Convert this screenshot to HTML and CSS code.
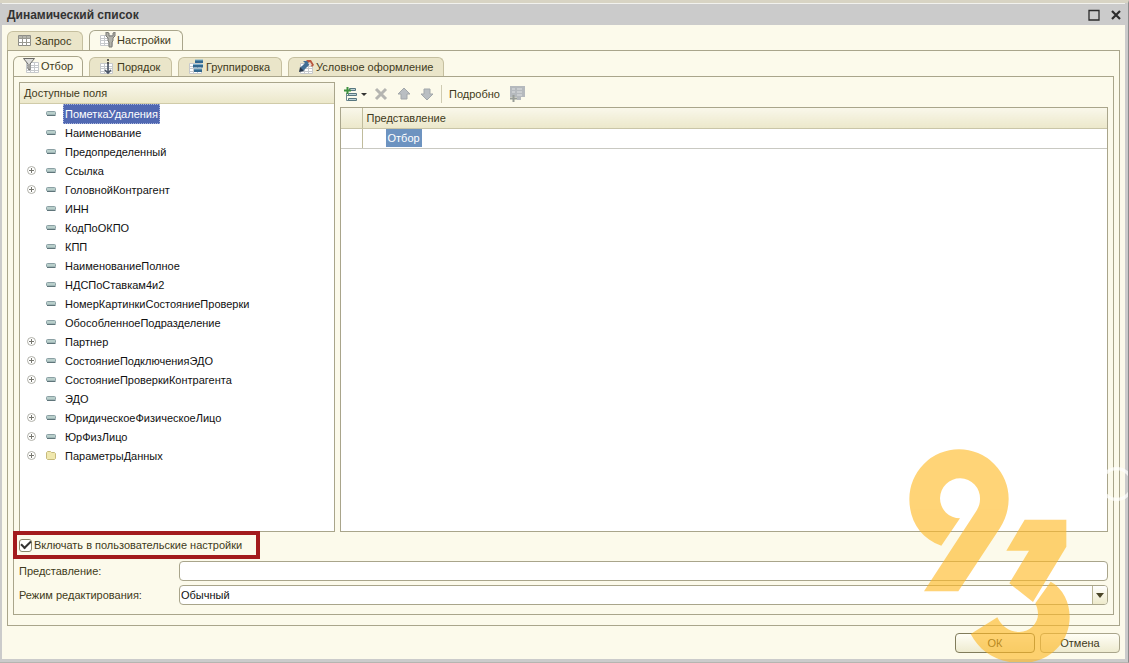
FILE: index.html
```html
<!DOCTYPE html>
<html lang="ru">
<head>
<meta charset="utf-8">
<title>Динамический список</title>
<link rel="stylesheet" href="styles.css">
</head>
<body>
<svg class="defs" aria-hidden="true">
  <symbol id="sheet" viewBox="0 0 16 16"><path d="M1.500 3.500h12v10h-12zM1.500 6.500h12M1.500 8.500h12M1.500 11.500h12M5.500 3.500v10M9.500 3.500v10" fill="#fff" stroke="#c6c9cc"/></symbol>
  <symbol id="plus" viewBox="0 0 9 9"><circle cx="4.500" cy="4.500" r="4" fill="#fff" stroke="#b0b0a8"/><path d="M2 4.500h5M4.500 2v5" stroke="#77776f"/></symbol>
  <symbol id="field" viewBox="0 0 10 5"><rect x=".5" y=".5" width="9" height="3.500" rx="1" fill="#b9cfcb" stroke="#8ba0a4"/><path d="M1 4.500h8.500" stroke="#5f757a"/></symbol>
  <symbol id="folder" viewBox="0 0 10 9"><path d="M.5 1.500l1-1h3l1 1h3l1 1v5l-1 1h-7l-1-1z" fill="#f0e8ae" stroke="#c6ba7c"/></symbol>
</svg>
<main class="window">
  <header class="titlebar">
    <h1>Динамический список</h1>
    <button class="winbtn" aria-label="Развернуть"><svg width="12" height="12" viewBox="0 0 12 12"><path d="M1 1.500h10V11H1z" fill="none" stroke="#2b2b2b" stroke-width="1.300"/></svg></button>
    <button class="winbtn" aria-label="Закрыть"><svg width="12" height="12" viewBox="0 0 12 12"><path d="M2 2l8 8M10 2l-8 8" stroke="#2b2b2b" stroke-width="2.200"/></svg></button>
  </header>
  <div class="body">
    <nav class="tabs">
      <button class="tab w76"><svg width="17" height="16" viewBox="0 0 17 16"><path d="M1.500 2.500h12v10h-12z" fill="#fff" stroke="#8d8d86"/><path d="M2 3h11v2H2z" fill="#b5b5ac"/><path d="M1.500 5.500h12M1.500 9.500h12M5.500 2.500v10M9.500 2.500v10" stroke="#9a9a92"/></svg>Запрос</button>
      <button class="tab w94 active"><svg width="17" height="16" viewBox="0 0 17 16"><use href="#sheet" width="16" height="16"/><path d="M7 0v4l2 2v3l1 1v5h3v-5l1-1V6l2-2V0l-2 1v3h-4V1z" fill="#b1b1aa" stroke="#7a7a74"/></svg>Настройки</button>
    </nav>
    <section class="panel outer">
      <nav class="tabs">
        <button class="tab w70 active"><svg width="17" height="16" viewBox="0 0 17 16"><use href="#sheet" x="2" y="1" width="16" height="16"/><path d="M.5.500h11L7 6v6l-2-1V6z" fill="#dededb" stroke="#696965"/></svg>Отбор</button>
        <button class="tab w83"><svg width="17" height="16" viewBox="0 0 17 16"><use href="#sheet" y="1" width="16" height="16"/><path d="M8 0h2v2H8zM8 3h2v2H8z" fill="#555"/><path d="M9 5v9M6 11l3 3 3-3" fill="none" stroke="#4b5668" stroke-width="1.600"/></svg>Порядок</button>
        <button class="tab w104"><svg width="17" height="16" viewBox="0 0 17 16"><use href="#sheet" y="1" width="16" height="16"/><path d="M7 1h8v3H7zM5 5.500h10v3H5zM6 10h8v3H6z" fill="#32688f"/><path d="M7 1h8M5 5.500h10M6 10h8" stroke="#80b3cd"/></svg>Группировка</button>
        <button class="tab w156"><svg width="17" height="16" viewBox="0 0 17 16"><use href="#sheet" x="1" y="1" width="16" height="16"/><path d="M5 2h5l2 3-7 7-3-3 5-5z" fill="#426f96"/><path d="M8 1h5l3 5-2 2-3-4z" fill="#b9563e"/><path d="M10 4l2-1 2 3-2 1z" fill="#e6d8cc"/><path d="M2 8l4 4-5 1z" fill="#26364b"/></svg>Условное оформление</button>
      </nav>
      <section class="panel inner">
        <div class="columns">
          <section class="fields">
            <h2 class="head">Доступные поля</h2>
            <ul class="tree">
              <li><i></i><svg class="f"><use href="#field"/></svg><span class="selected">ПометкаУдаления</span></li>
              <li><i></i><svg class="f"><use href="#field"/></svg><span>Наименование</span></li>
              <li><i></i><svg class="f"><use href="#field"/></svg><span>Предопределенный</span></li>
              <li><svg class="p"><use href="#plus"/></svg><svg class="f"><use href="#field"/></svg><span>Ссылка</span></li>
              <li><svg class="p"><use href="#plus"/></svg><svg class="f"><use href="#field"/></svg><span>ГоловнойКонтрагент</span></li>
              <li><i></i><svg class="f"><use href="#field"/></svg><span>ИНН</span></li>
              <li><i></i><svg class="f"><use href="#field"/></svg><span>КодПоОКПО</span></li>
              <li><i></i><svg class="f"><use href="#field"/></svg><span>КПП</span></li>
              <li><i></i><svg class="f"><use href="#field"/></svg><span>НаименованиеПолное</span></li>
              <li><i></i><svg class="f"><use href="#field"/></svg><span>НДСПоСтавкам4и2</span></li>
              <li><i></i><svg class="f"><use href="#field"/></svg><span>НомерКартинкиСостояниеПроверки</span></li>
              <li><i></i><svg class="f"><use href="#field"/></svg><span>ОбособленноеПодразделение</span></li>
              <li><svg class="p"><use href="#plus"/></svg><svg class="f"><use href="#field"/></svg><span>Партнер</span></li>
              <li><svg class="p"><use href="#plus"/></svg><svg class="f"><use href="#field"/></svg><span>СостояниеПодключенияЭДО</span></li>
              <li><svg class="p"><use href="#plus"/></svg><svg class="f"><use href="#field"/></svg><span>СостояниеПроверкиКонтрагента</span></li>
              <li><i></i><svg class="f"><use href="#field"/></svg><span>ЭДО</span></li>
              <li><svg class="p"><use href="#plus"/></svg><svg class="f"><use href="#field"/></svg><span>ЮридическоеФизическоеЛицо</span></li>
              <li><svg class="p"><use href="#plus"/></svg><svg class="f"><use href="#field"/></svg><span>ЮрФизЛицо</span></li>
              <li><svg class="p"><use href="#plus"/></svg><svg class="d"><use href="#folder"/></svg><span>ПараметрыДанных</span></li>
            </ul>
          </section>
          <section class="filter">
            <div class="toolbar">
              <button class="tool add" aria-label="Добавить"><svg width="24" height="16" viewBox="0 0 24 16"><path d="M3.500 7v7.500H7M3.500 9.500H7" fill="none" stroke="#6c8790"/><path d="M6.500 2.500h6v2h-6zM5.500 7.500h8v2h-8zM5.500 12.500h8v2h-8z" fill="#bfd3d6" stroke="#58777f"/><path d="M1 4.500h7M4.500 1v7" stroke="#3f9140" stroke-width="2"/><path d="M18 7h6l-3 3z" fill="#333"/></svg></button>
              <button class="tool" aria-label="Удалить"><svg width="14" height="16" viewBox="0 0 14 16"><path d="M2 3l10 10M12 3L2 13" stroke="#b5b5b1" stroke-width="3"/></svg></button>
              <button class="tool" aria-label="Вверх"><svg width="14" height="16" viewBox="0 0 14 16"><path d="M7 2l6 6h-3v5H4V8H1z" fill="#b9bec2" stroke="#a2a7aa"/></svg></button>
              <button class="tool" aria-label="Вниз"><svg width="14" height="16" viewBox="0 0 14 16"><path d="M7 14L1 8h3V3h6v5h3z" fill="#b9bec2" stroke="#a2a7aa"/></svg></button>
              <span class="sep"></span>
              <button class="tool more">Подробно</button>
              <button class="tool" aria-label="Добавить группу"><svg width="17" height="17" viewBox="0 0 17 17"><path d="M1 1h15v11h-4v3H8v-3H1z" fill="#b5b9bd"/><path d="M3 4h3M8 4h5M3 7h3M8 7h5M8 10h5" stroke="#dfe1e2"/><path d="M1 13.500h7M4.500 10v7" stroke="#989d98" stroke-width="2"/></svg></button>
            </div>
            <div class="tablebox">
              <table>
                <thead><tr><th class="mark"></th><th>Представление</th></tr></thead>
                <tbody><tr><td class="mark"></td><td class="item"><span>Отбор</span></td></tr></tbody>
              </table>
            </div>
          </section>
        </div>
        <label class="check"><input type="checkbox" checked><span>Включать в пользовательские настройки</span></label>
        <div class="form">
          <label for="view">Представление:</label>
          <input id="view" class="ctl" type="text">
          <label for="mode">Режим редактирования:</label>
          <div class="combo ctl"><select id="mode"><option>Обычный</option></select><span class="arrow"><svg width="8" height="5" viewBox="0 0 8 5"><path d="M0 0h8L4 5z" fill="#4a4528"/></svg></span></div>
        </div>
      </section>
    </section>
    <footer class="actions"><button class="action ok">ОК</button><button class="action">Отмена</button></footer>
  </div>
  <svg class="logo" viewBox="0 0 747 699" aria-hidden="true">
    <g fill="#ffb924" opacity=".62">
      <path d="M184 347C120 325 88 270 88 207A149 149 0 0 1 386 207C386 240 375 270 360 294L235 484H132L287 246C296 232 300 222 300 207A60 60 0 1 0 240 265Z"/>
      <path d="M434 269H559V350L459 516L388 460L447 362H379Z"/>
      <path d="M512 455C550 475 569 520 569 560C569 640 505 699 425 699C350 699 300 665 272 612L352 562C365 590 390 606 418 606C450 606 474 580 474 552C474 540 470 528 466 520Z"/>
    </g>
    <circle cx="710" cy="162" r="46" fill="none" stroke="#fff" stroke-width="10" opacity=".7"/>
  </svg>
</main>
</body>
</html>
```
FILE: styles.css
```css
* { box-sizing: border-box; }
body { margin: 0; font: 11px/14px "Liberation Sans", Arial, sans-serif; color: #3f3a20; }
button, input, select { font: inherit; color: inherit; margin: 0; }
button { display: flex; align-items: center; border: 0; padding: 0; background: none; }
svg { display: block; flex: none; }
.defs { position: absolute; width: 0; height: 0; }
.window { position: relative; display: flex; flex-direction: column; min-height: 100vh; overflow: hidden; background: #cbcbcb; border-top: 3px solid #d8d4c4; border-right: 1px solid #8c8c8c; border-bottom: 1px solid #b5b5b0; padding: 0 3px 3px 2px; }
.titlebar { display: flex; align-items: center; gap: 10px; height: 22px; padding: 1px 3px 0 5px; border-top: 1px solid #f2f2ee; }
.titlebar h1 { margin: 0; flex: 1; font-size: 12px; font-weight: bold; color: #333; }
.body { flex: 1; display: flex; flex-direction: column; background: #fcfaeb; padding: 5px 5px 6px; }
.tabs { display: flex; align-items: flex-end; gap: 6px; height: 21px; margin-bottom: -1px; }
.tab { height: 20px; gap: 1px; padding: 0 0 1px 9px; border: 1px solid #c5bf9f; border-bottom-color: #a9a58b; border-radius: 6px 6px 0 0; background: #eae5c9; white-space: nowrap; }
.tab.active { height: 21px; border-color: #a9a58b; border-bottom-color: #fcfaeb; background: #fcfaeb; }
.w76 { width: 76px; } .w94 { width: 94px; } .w70 { width: 70px; } .w83 { width: 83px; } .w104 { width: 104px; } .w156 { width: 156px; }
.panel { flex: 1; display: flex; flex-direction: column; border: 1px solid #a9a58b; padding: 5px; }
.outer { padding-bottom: 10px; }
.inner { padding-bottom: 9px; }
.columns { flex: 1; display: grid; grid-template-columns: 316px minmax(0, 1fr); gap: 5px; }
.fields, .tablebox { border: 1px solid #a9a58b; background: #fff; }
.head { margin: 0; padding: 3px 4px; height: 21px; font-size: inherit; font-weight: normal; border-bottom: 1px solid #d0cba9; background: linear-gradient(#f9f7ea, #ece8cb); }
.tree { margin: 0; padding: 0 0 0 7px; list-style: none; color: #111; }
.tree li { display: flex; align-items: center; height: 19px; }
.tree i, .p { width: 9px; height: 9px; margin-right: 10px; }
.f { width: 10px; height: 5px; margin-right: 7px; }
.d { width: 10px; height: 9px; margin-right: 7px; }
.tree span { padding: 2px 1px; border: 1px dotted transparent; }
.tree .selected { color: #fff; background: #5068b2; border-color: #a8b4dc; }
.filter { display: flex; flex-direction: column; }
.toolbar { display: flex; align-items: center; gap: 9px; height: 25px; padding: 0 0 2px 3px; }
.tool { height: 20px; }
.add { margin-right: -2px; }
.sep { width: 1px; height: 18px; background: #cfcbb2; margin: 0 -2px; }
.tablebox { flex: 1; }
table { width: 100%; border-collapse: collapse; }
th, td { height: 20px; padding: 0 4px; text-align: left; font-weight: normal; border-bottom: 1px solid #c9c5a8; }
th { background: linear-gradient(#f9f7ea, #ece8cb); }
td { border-bottom-color: #c9c9c2; }
.mark { width: 21px; border-right: 1px solid #c0bc9c; }
td.item { padding: 0 0 0 23px; }
.item span { display: inline-block; padding: 2px 2px; color: #fff; background: #6d93c0; }
.check { display: flex; align-items: center; align-self: flex-start; gap: 2px; height: 28px; width: 247px; margin: -1px 0 0 -6px; padding-left: 2px; border: 4px solid #a31b1d; }
.check input { appearance: none; width: 13px; height: 13px; border: 1px solid #8c886d; border-radius: 3px; background: #fff; display: grid; place-items: center; }
.check input:checked::after { content: ""; width: 8px; height: 4px; border: solid #333; border-width: 0 0 2px 2px; transform: rotate(-45deg) translate(1px, -1px); }
.form { display: grid; grid-template-columns: 160px minmax(0, 1fr); gap: 4px 0; align-items: center; margin-top: 2px; }
.ctl { height: 20px; border: 1px solid #a9a58b; border-radius: 4px; background: #fff; color: #111; }
.combo { display: flex; overflow: hidden; }
.combo select { appearance: none; flex: 1; border: 0; padding: 0 1px; background: transparent; }
.arrow { width: 15px; display: grid; place-items: center; border-left: 1px solid #b9b596; background: linear-gradient(#fff, #eeeacb); }
.actions { display: flex; justify-content: flex-end; gap: 5px; margin-top: 7px; }
.action { width: 80px; height: 20px; justify-content: center; border: 1px solid #a9a58b; border-radius: 4px; background: linear-gradient(#fffef6, #eeebd0); }
.ok { border-color: #817c5b; }
.logo { position: absolute; right: -1px; bottom: -1px; width: 249px; height: 233px; pointer-events: none; }
```
